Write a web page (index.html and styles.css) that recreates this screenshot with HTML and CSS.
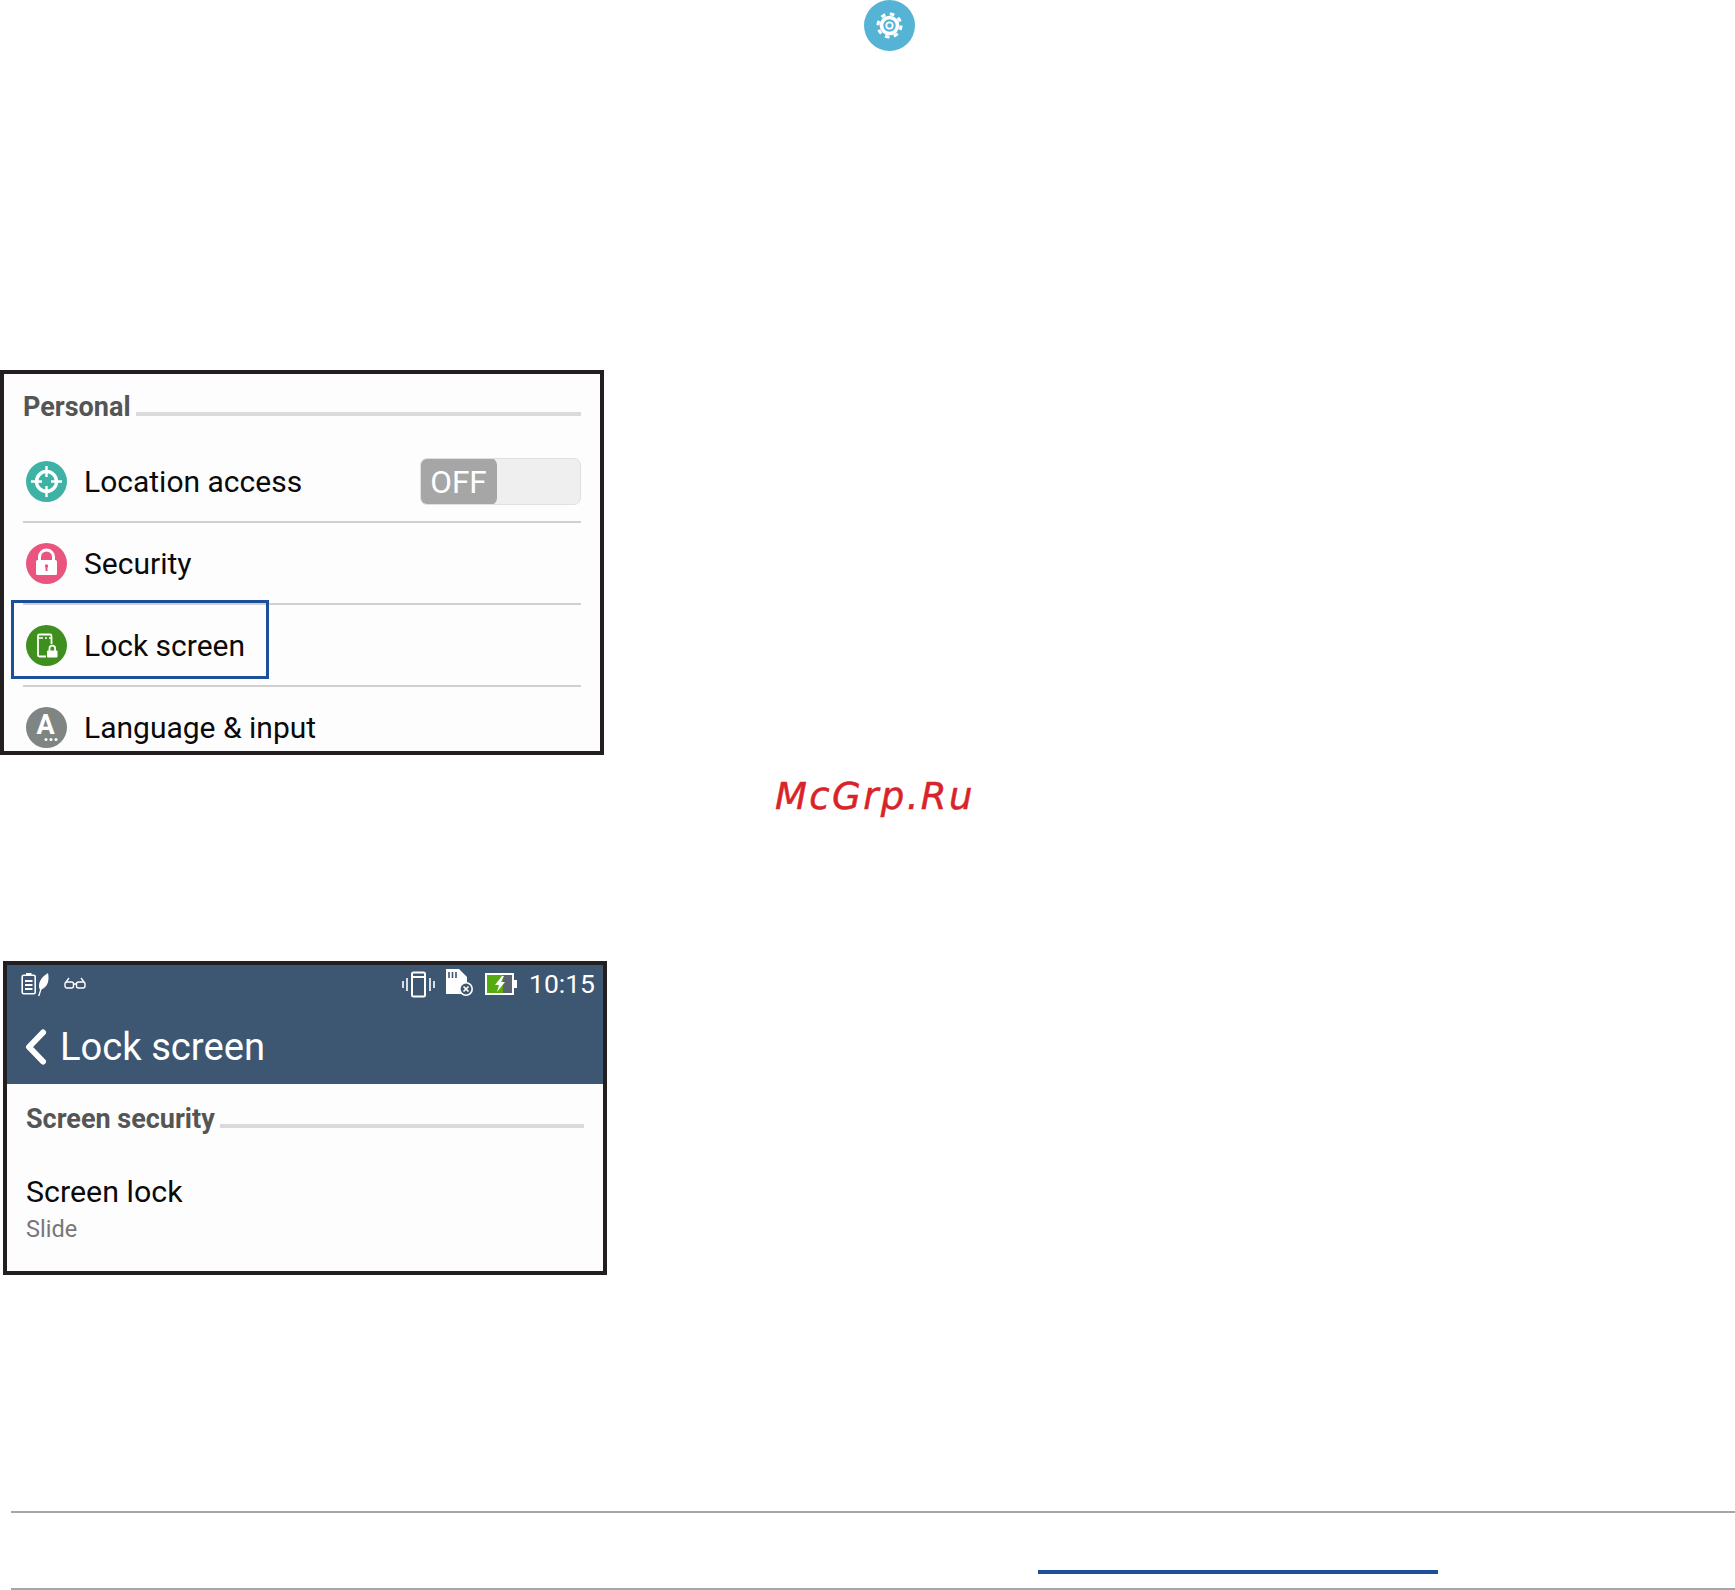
FILE: index.html
```html
<!DOCTYPE html>
<html lang="en">
<head>
<meta charset="utf-8">
<title>Lock screen</title>
<link rel="stylesheet" href="styles.css">
</head>
<body>
<div class="page">
  <div class="gear-row">
    <svg class="gear" viewBox="0 0 51 51">
      <circle cx="25.5" cy="25.5" r="25.5" fill="#55b4d6"/>
      <circle cx="25.5" cy="25.5" r="11.5" fill="none" stroke="#fff" stroke-width="3" stroke-dasharray="4.5 4.53"/>
      <circle cx="25.5" cy="25.5" r="8" fill="none" stroke="#fff" stroke-width="3.6"/>
      <circle cx="25.5" cy="25.5" r="3.2" fill="none" stroke="#fff" stroke-width="1.8"/>
    </svg>
  </div>

  <section class="panel panel-personal">
    <div class="section-head"><span class="section-title">Personal</span><span class="section-rule"></span></div>
    <div class="row">
      <svg class="row-icon" viewBox="0 0 41 41">
        <circle cx="20.5" cy="20.5" r="20.5" fill="#3eb2a5"/>
        <circle cx="20.5" cy="20.5" r="10" fill="none" stroke="#fff" stroke-width="3.400"/>
        <path d="M20.5 5v11M20.5 25v11M5 20.5h11M25 20.5h11" stroke="#fff" stroke-width="2.400"/>
      </svg>
      <span class="row-label">Location access</span>
      <span class="toggle"><span class="toggle-thumb">OFF</span></span>
    </div>
    <div class="row">
      <svg class="row-icon" viewBox="0 0 41 41">
        <circle cx="20.5" cy="20.5" r="20.5" fill="#e9557f"/>
        <path d="M13.5 18v-4a7 7 0 0 1 14 0v4" fill="none" stroke="#fff" stroke-width="3"/>
        <rect x="10" y="17" width="21" height="15" rx="1.5" fill="#fff"/>
        <path d="M20.5 22v6" stroke="#e9557f" stroke-width="2"/>
        <circle cx="20.5" cy="23" r="1.7" fill="#e9557f"/>
      </svg>
      <span class="row-label">Security</span>
    </div>
    <div class="row">
      <svg class="row-icon" viewBox="0 0 41 41">
        <circle cx="20.5" cy="20.5" r="20.5" fill="#3f8f1f"/>
        <path d="M20 31.500h-6.500a1.500 1.500 0 0 1-1.500-1.500V11a1.500 1.500 0 0 1 1.500-1.500h10.500a1.500 1.500 0 0 1 1.500 1.500v8" fill="none" stroke="#fff" stroke-width="1.800"/>
        <path d="M13 13h4M19 13h2M23 13h2" stroke="#fff" stroke-width="1.500"/>
        <path d="M23.500 26v-2.500a2.800 2.800 0 0 1 5.600 0v2.500" fill="none" stroke="#fff" stroke-width="1.800"/>
        <rect x="21" y="25.500" width="10.500" height="7" rx="1" fill="#fff"/>
      </svg>
      <span class="row-label">Lock screen</span>
    </div>
    <div class="row">
      <svg class="row-icon" viewBox="0 0 41 41">
        <circle cx="20.5" cy="20.5" r="20.5" fill="#7f8583"/>
        <text class="glyph-a" x="19.500" y="27" text-anchor="middle">A</text>
        <circle cx="20" cy="32.500" r="1.500" fill="#fff"/><circle cx="25" cy="32.500" r="1.500" fill="#fff"/><circle cx="30" cy="32.500" r="1.500" fill="#fff"/>
      </svg>
      <span class="row-label">Language &amp; input</span>
    </div>
    <div class="highlight"></div>
  </section>

  <div class="watermark">McGrp.Ru</div>

  <section class="panel panel-lock">
    <header class="appbar">
      <div class="statusbar">
        <svg class="st st-saver" viewBox="0 0 30 24">
          <rect x="1.2" y="3.2" width="13" height="18.6" rx="1.5" fill="none" stroke="#fff" stroke-width="1.6"/>
          <rect x="5" y="1" width="5.5" height="2" fill="#fff"/>
          <path d="M4 9h7.5M4 13h7.5M4 17h7.5" stroke="#fff" stroke-width="2"/>
          <path d="M17 24l2-6c-3-6 1-13 8-17 1.500 7 0 14-6.500 16.500L18.500 24z" fill="#fff"/>
        </svg>
        <svg class="st st-glasses" viewBox="0 0 22 12">
          <rect x="1" y="5" width="8.5" height="6" rx="2" fill="none" stroke="#fff" stroke-width="1.4"/>
          <rect x="12.5" y="5" width="8.5" height="6" rx="2" fill="none" stroke="#fff" stroke-width="1.4"/>
          <path d="M9.5 7h3M2 5l3-4M20 5l-3-4" fill="none" stroke="#fff" stroke-width="1.3"/>
        </svg>
        <span class="status-spacer"></span>
        <svg class="st st-vibrate" viewBox="0 0 33 27">
          <rect x="10" y="1.5" width="13" height="24" rx="1.5" fill="none" stroke="#fff" stroke-width="2"/>
          <path d="M11 6h11" stroke="#fff" stroke-width="2"/>
          <path d="M1 10v7M5 7v13M28 7v13M32 10v7" stroke="#fff" stroke-width="1.6"/>
        </svg>
        <svg class="st st-sd" viewBox="0 0 29 27">
          <path d="M1 0h13l8 8v17H1z" fill="#fff"/>
          <path d="M4 3v6M7.5 3v6M11 3v6" stroke="#3d5672" stroke-width="1.6"/>
          <circle cx="21" cy="20" r="7" fill="#fff"/>
          <circle cx="21" cy="20" r="5.4" fill="#3d5672"/>
          <path d="M18.5 17.5l5 5M23.5 17.5l-5 5" stroke="#fff" stroke-width="1.7"/>
        </svg>
        <svg class="st st-battery" viewBox="0 0 32 22">
          <rect x="1" y="1" width="27" height="20" fill="#59636f" stroke="#fff" stroke-width="2"/>
          <rect x="2" y="2" width="16" height="18" fill="#56ab0e"/>
          <rect x="28" y="7" width="4" height="8" fill="#fff"/>
          <path d="M17 3l-7 9h4l-2 7 8-10h-4l3-6z" fill="#fff"/>
        </svg>
        <span class="clock">10:15</span>
      </div>
      <div class="appbar-title">
        <svg class="chevron" viewBox="0 0 22 36">
          <path d="M18 3.500 4 18 18 32.500" fill="none" stroke="#fff" stroke-width="6" stroke-linecap="round" stroke-linejoin="round"/>
        </svg>
        <span class="title-text">Lock screen</span>
      </div>
    </header>
    <div class="lock-body">
      <div class="section-head section-head-lock"><span class="section-title">Screen security</span><span class="section-rule"></span></div>
      <div class="setting-name">Screen lock</div>
      <div class="setting-value">Slide</div>
    </div>
  </section>

  <footer class="footer">
    <div class="footer-accent"></div>
  </footer>
</div>
</body>
</html>
```
FILE: styles.css
```css
* { box-sizing: border-box; }
html, body { margin: 0; padding: 0; background: #fff; }
body { font-family: Roboto, "Liberation Sans", sans-serif; }
.page { width: 1735px; height: 1590px; overflow: hidden; display: flex; flex-direction: column; align-items: flex-start; }

.gear-row { padding-left: 864px; height: 51px; }
.gear { display: block; width: 51px; height: 51px; }

.panel { position: relative; background: #fdfdfd; border: 4px solid #231f20; overflow: hidden; }
.panel-personal { width: 604px; height: 385px; margin-top: 319px; padding: 0 19px; }
.panel-lock { width: 604px; height: 314px; margin-left: 3px; margin-top: 143px; }

.section-head { height: 67px; display: flex; align-items: flex-end; gap: 5px; padding-bottom: 19px; }
.section-title { font-size: 27px; font-weight: 700; color: #555; line-height: 30px; }
.section-rule { flex: 1; height: 4px; background: #d9dbdb; margin-bottom: 6px; }

.row { height: 82px; display: flex; align-items: center; border-bottom: 2px solid #d0d0d0; }
.row:last-of-type { border-bottom: 0; padding-bottom: 2px; }
.row-icon { width: 41px; height: 41px; margin-left: 3px; flex: none; }
.row-label { margin-left: 17px; padding-top: 2px; font-size: 30px; color: #0a0a0a; line-height: 40px; }
.glyph-a { font-family: Roboto, sans-serif; font-weight: 700; font-size: 27px; fill: #fff; }

.toggle { margin-left: auto; width: 161px; height: 47px; background: #efefef; border: 1px solid #e0e0e0; border-radius: 7px; overflow: hidden; }
.toggle-thumb { display: flex; align-items: center; justify-content: center; width: 77px; height: 47px; margin: -1px; padding-top: 2px; background: #a6a6a6; border-radius: 7px; color: #fff; font-size: 31.5px; }

.highlight { position: absolute; left: 7px; top: 226px; width: 258px; height: 79px; border: 3px solid #1c4f9c; }

.watermark { margin: 20px 0 0 775px; font-family: "DejaVu Sans", sans-serif; font-style: oblique; font-size: 37px; line-height: 43px; letter-spacing: 2.4px; color: #d9232a; -webkit-text-stroke: 0.5px #d9232a; height: 43px; }

.appbar { background: #3d5672; height: 119px; color: #fff; }
.statusbar { height: 38px; display: flex; align-items: center; padding: 0 8px 0 14px; }
.status-spacer { flex: 1; }
.st { display: block; flex: none; }
.st-saver { width: 30px; height: 24px; }
.st-glasses { width: 22px; height: 12px; margin-left: 13px; margin-top: -3px; }
.st-vibrate { width: 33px; height: 27px; }
.st-sd { width: 29px; height: 27px; margin-left: 10px; margin-top: -3px; }
.st-battery { width: 32px; height: 22px; margin-left: 11px; }
.clock { margin-left: 12px; font-size: 26.5px; line-height: 32px; }
.appbar-title { display: flex; align-items: center; height: 81px; padding: 6px 0 0 18px; }
.chevron { width: 22px; height: 36px; }
.title-text { margin-left: 13px; font-size: 38.2px; line-height: 44px; }

.lock-body { padding: 0 19px 0 19px; }
.section-head-lock { height: 55px; padding-bottom: 5px; }
.setting-name { margin-top: 33px; font-size: 30.4px; line-height: 40px; color: #0a0a0a; }
.setting-value { margin-top: 2px; font-size: 23.5px; line-height: 30px; color: #777; }

.footer { position: relative; align-self: stretch; margin: 236px 0 0 11px; height: 79px; border-top: 2px solid #a6a6a6; border-bottom: 2px solid #a6a6a6; }
.footer-accent { position: absolute; left: 1027px; top: 57px; width: 400px; height: 4px; background: #1c4f9c; }
```
